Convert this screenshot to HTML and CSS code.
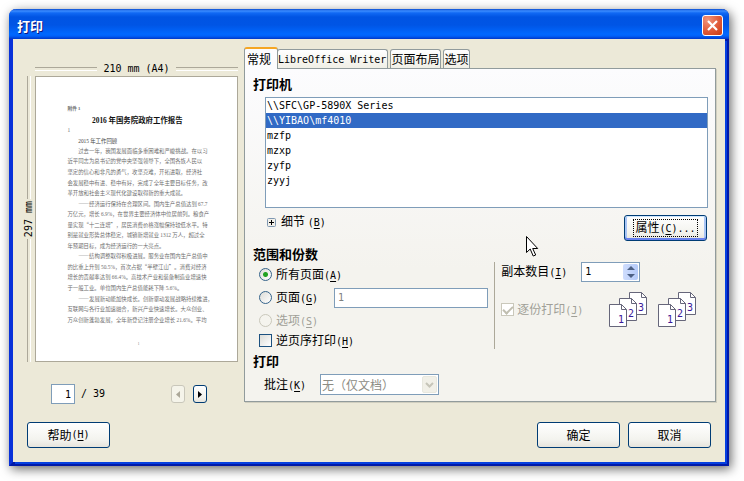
FILE: index.html
```html
<!DOCTYPE html>
<html lang="zh-CN">
<head>
<meta charset="utf-8">
<title>打印</title>
<link rel="stylesheet" href="styles.css">
</head>
<body>
<form class="window">
  <header class="titlebar">
    <h1>打印</h1>
    <button type="button" class="close" aria-label="关闭">
      <svg width="11" height="11" viewBox="0 0 11 11"><path d="M1 1L10 10M10 1L1 10" stroke="#fff" stroke-width="2.2"/></svg>
    </button>
  </header>

  <main class="client">
    <div class="columns">
      <section class="preview">
        <div class="ruler ruler-x"><span class="lat">210 mm (A4)</span></div>
        <div class="ruler ruler-y"><span class="lat">297 mm</span></div>
        <svg class="paper" viewBox="0 0 595 842">
          <g class="bold"><text x="93" y="99" font-size="14">附件 <tspan class="n">1</tspan></text></g>
          <text class="title" x="300" y="135" text-anchor="middle"><tspan class="n">2016</tspan> 年国务院政府工作报告</text>
          <text class="n" x="93" y="162">1</text>
          <text class="sub" x="125" y="194"><tspan class="n">2015</tspan> 年工作回顾</text>
          <text x="125" y="225">过去一年，我国发展面临多重困难和严峻挑战。在以习</text>
          <text x="93" y="256">近平同志为总书记的党中央坚强领导下，全国各族人民以</text>
          <text x="93" y="287">坚定的信心和非凡的勇气，攻坚克难，开拓进取，经济社</text>
          <text x="93" y="319">会发展稳中有进、稳中有好，完成了全年主要目标任务，改</text>
          <text x="93" y="350">革开放和社会主义现代化建设取得新的重大成就。</text>
          <text x="125" y="381">——经济运行保持在合理区间。国内生产总值达到 <tspan class="n">67.7</tspan></text>
          <text x="93" y="412">万亿元，增长 <tspan class="n">6.9%</tspan>，在世界主要经济体中位居前列。粮食产</text>
          <text x="93" y="443">量实现“十二连增”，居民消费价格涨幅保持较低水平。特</text>
          <text x="93" y="475">别是就业形势总体稳定，城镇新增就业 <tspan class="n">1312</tspan> 万人，超过全</text>
          <text x="93" y="506">年预期目标，成为经济运行的一大亮点。</text>
          <text x="125" y="537">——结构调整取得积极进展。服务业在国内生产总值中</text>
          <text x="93" y="568">的比重上升到 <tspan class="n">50.5%</tspan>，首次占据“半壁江山”。消费对经济</text>
          <text x="93" y="599">增长的贡献率达到 <tspan class="n">66.4%</tspan>。高技术产业和装备制造业增速快</text>
          <text x="93" y="631">于一般工业。单位国内生产总值能耗下降 <tspan class="n">5.6%</tspan>。</text>
          <text x="125" y="662">——发展新动能加快成长。创新驱动发展战略持续推进，</text>
          <text x="93" y="693">互联网与各行业加速融合，新兴产业快速增长。大众创业、</text>
          <text x="93" y="724">万众创新蓬勃发展，全年新登记注册企业增长 <tspan class="n">21.6%</tspan>。平均</text>
          <text class="n" x="301" y="794" font-size="10">1</text>
        </svg>
        <div class="pager">
          <input class="field lat page" type="text" value="1" aria-label="页码">
          <span class="lat">/ 39</span>
          <div class="steps">
            <button type="button" class="btn step" disabled aria-label="上一页"><svg width="4" height="7" viewBox="0 0 4 7"><path d="M4 0v7L0 3.5z" fill="currentColor"/></svg></button>
            <button type="button" class="btn step" aria-label="下一页"><svg width="4" height="7" viewBox="0 0 4 7"><path d="M0 0v7L4 3.5z" fill="currentColor"/></svg></button>
          </div>
        </div>
      </section>

      <section class="options">
        <div class="tabs" role="tablist">
          <button type="button" class="tab active" role="tab" aria-selected="true">常规</button>
          <button type="button" class="tab" role="tab"><span class="lat">LibreOffice Writer</span></button>
          <button type="button" class="tab" role="tab">页面布局</button>
          <button type="button" class="tab" role="tab">选项</button>
        </div>
        <div class="panel" role="tabpanel">
          <h2 id="printers">打印机</h2>
          <select class="printers lat" size="7" aria-labelledby="printers">
            <option>\\SFC\GP-5890X Series</option>
            <option selected>\\YIBAO\mf4010</option>
            <option>mzfp</option>
            <option>mzxp</option>
            <option>zyfp</option>
            <option>zyyj</option>
          </select>
          <div class="details-row">
            <button type="button" class="expander">
              <svg width="9" height="9" viewBox="0 0 9 9"><rect x=".5" y=".5" width="8" height="8" rx="1" fill="#f1efe8" stroke="#7f98b2"/><path d="M2 4.5h5M4.5 2v5" stroke="#000"/></svg>
              <span>细节 <span class="lat">(<u>B</u>)</span></span>
            </button>
            <button type="button" class="btn focus"><span class="dots">属性<span class="lat">(<u>C</u>)...</span></span></button>
          </div>

          <h2 class="range-title">范围和份数</h2>
          <div class="range">
            <div class="scope">
              <div class="line"><input type="radio" name="scope" id="all" checked><label for="all">所有页面<span class="lat">(<u>A</u>)</span></label></div>
              <div class="line"><input type="radio" name="scope" id="pages"><label for="pages">页面<span class="lat">(<u>G</u>)</span></label><input class="field lat pages" type="text" value="1" aria-label="页面范围"></div>
              <div class="line off"><input type="radio" name="scope" id="sel" disabled><label for="sel">选项<span class="lat">(<u>S</u>)</span></label></div>
              <div class="line last"><input type="checkbox" id="reverse"><label for="reverse">逆页序打印<span class="lat">(<u>H</u>)</span></label></div>
            </div>
            <div class="copies">
              <div class="copy-line">
                <label for="count">副本数目<span class="lat">(<u>I</u>)</span></label>
                <div class="field spin">
                  <input type="text" class="lat" id="count" value="1">
                  <div class="spin-buttons">
                    <button type="button" aria-label="增加"><svg width="8" height="4" viewBox="0 0 8 4"><path d="M0 4L4 0l4 4z" fill="#4d6185"/></svg></button>
                    <button type="button" aria-label="减少"><svg width="8" height="4" viewBox="0 0 8 4"><path d="M0 0l4 4 4-4z" fill="#4d6185"/></svg></button>
                  </div>
                </div>
              </div>
              <div class="collate-line off">
                <input type="checkbox" id="collate" checked disabled><label for="collate">逐份打印<span class="lat">(<u>J</u>)</span></label>
                <svg class="stack" width="38" height="35" viewBox="0 0 38 35">
                  <defs>
                    <g id="sheet"><path d="M.5 .5h12l5 5v17H.5z" fill="#fff" stroke="#66667a"/><path d="M12.500 .5v5h5" fill="none" stroke="#66667a"/></g>
                    <g id="stack">
                      <use href="#sheet" x="20" y="0"/><text x="29" y="19">3</text>
                      <use href="#sheet" x="10" y="6"/><text x="19" y="25">2</text>
                      <use href="#sheet" x="0" y="12"/><text x="9" y="31">1</text>
                    </g>
                  </defs>
                  <use href="#stack"/>
                </svg>
                <svg class="stack" width="38" height="35" viewBox="0 0 38 35"><use href="#stack"/></svg>
              </div>
            </div>
          </div>

          <h2 class="print-title">打印</h2>
          <div class="comment-line">
            <label for="comment">批注<span class="lat">(<u>K</u>)</span></label>
            <div class="combo">
              <select id="comment" class="field" disabled><option>无（仅文档）</option></select>
              <span class="arrow"><svg width="9" height="6" viewBox="0 0 9 6"><path d="M1 1l3.5 3.5L8 1" fill="none" stroke="#c6c5b9" stroke-width="2"/></svg></span>
            </div>
          </div>
        </div>
      </section>
    </div>

    <footer class="actions">
      <button type="button" class="btn help">帮助<span class="lat">(<u>H</u>)</span></button>
      <button type="submit" class="btn">确定</button>
      <button type="button" class="btn">取消</button>
    </footer>
  </main>
</form>
<svg class="pointer" width="13" height="21" viewBox="0 0 13 21"><path d="M.5 .5v16l3.700-3.500 3 7 2.500-1-3-6.500h5z" fill="#fff" stroke="#000"/></svg>
</body>
</html>
```
FILE: styles.css
```css
* { box-sizing: border-box; }

body {
  margin: 0;
  padding: 9px 15px 15px 9px;
  background: #fff;
  color: #000;
  font: 12px/16px "Noto Sans CJK SC", sans-serif;
}

button, input, select {
  margin: 0;
  padding: 0;
  border: 0;
  background: none;
  color: inherit;
  font: inherit;
}

.lat {
  font-family: "DejaVu Sans Mono", "Noto Sans CJK SC", monospace;
  font-size: 10px;
}

u { text-underline-offset: 2px; }

/* Window frame */
.window {
  border: 4px solid #0540e0;
  border-top: 0;
  border-color: #0540e0 #0019a8 #0019a8 #0831d9;
  border-radius: 7px 7px 0 0;
  background: #ece9d8;
  box-shadow: 2px 3px 11px rgba(0, 0, 0, 0.6);
}

.titlebar {
  display: flex;
  align-items: center;
  justify-content: space-between;
  height: 30px;
  margin: 0 -4px;
  padding: 3px 6px 0 8px;
  border-radius: 7px 7px 0 0;
  background: linear-gradient(#0a4cd0 0, #3a8cff 2px, #1069f4 4px, #0054e3 8px, #0055e5 16px, #0068ff 25px, #0061fa 27px, #0038c8 30px);
}

h1 {
  margin: 0;
  color: #fff;
  font-size: 13px;
  line-height: 18px;
  text-shadow: 1px 1px 0 #0a1883;
}

.close {
  display: flex;
  align-items: center;
  justify-content: center;
  width: 21px;
  height: 21px;
  border: 1px solid #fff;
  border-radius: 3px;
  background: radial-gradient(circle at 25% 20%, #f0957c, #e05a38 55%, #c93a10);
}

.client {
  padding: 8px 9px 14px 14px;
  box-shadow: 2px 2px 0 #0540e0;
}

.columns {
  display: grid;
  grid-template-columns: 210px 1fr;
  align-items: start;
  gap: 6px;
  padding-left: 1px;
}

/* Page preview */
.preview {
  display: grid;
  grid-template-columns: 7px 1fr;
  grid-template-rows: 14px auto auto;
  align-content: start;
  padding-top: 15px;
}

.ruler {
  display: flex;
  align-items: center;
  gap: 6px;
  line-height: 14px;
  white-space: nowrap;
}

.ruler::before, .ruler::after {
  content: "";
  flex: 1;
}

.ruler-x { grid-column: 2; }

.ruler-x::before, .ruler-x::after {
  height: 2px;
  border-top: 1px solid #aca899;
  border-bottom: 1px solid #fff;
}

.ruler-y {
  writing-mode: vertical-rl;
  justify-self: center;
  width: 2px;
  margin-right: 5px;
  gap: 2px;
}

.ruler-y .lat {
  flex: none;
  transform: rotate(180deg);
}

.ruler-y::before, .ruler-y::after {
  width: 2px;
  border-left: 1px solid #aca899;
  border-right: 1px solid #fff;
}

.paper {
  display: block;
  width: 100%;
  border: 1px solid #aca899;
  background: #fff;
  fill: #6e6e6e;
  font-size: 16px;
}

.paper .n { font-family: "Liberation Serif", serif; }
.paper .bold { font-weight: 700; }
.paper .title { fill: #111; font-size: 22px; font-weight: 700; }
.paper .sub { fill: #444; }

.pager {
  grid-column: 1 / -1;
  display: flex;
  align-items: center;
  gap: 6px;
  padding: 22px 31px 0 23px;
}

.field {
  border: 1px solid #7f9db9;
  background: #fff;
}

.page {
  width: 24px;
  height: 20px;
  padding-right: 3px;
  text-align: right;
}

.steps {
  display: flex;
  gap: 8px;
  margin-left: auto;
}

/* Buttons */
.btn {
  display: flex;
  align-items: center;
  justify-content: center;
  width: 83px;
  height: 26px;
  border: 1px solid #003c74;
  border-radius: 3px;
  background: linear-gradient(#fff, #f3f3ee 70%, #e6e4dc);
}

.btn .lat { line-height: 14px; }

.btn.step {
  width: 14px;
  height: 18px;
}

.btn:disabled {
  border-color: #c9c7ba;
  background: #f5f4ea;
  color: #aca899;
}

.btn.focus {
  margin-top: 2px;
  box-shadow: inset 0 1px 0 #cee7ff, inset 0 -2px 0 #6982ee, inset 2px 0 0 #a9c5f5, inset -2px 0 0 #a9c5f5;
}

.dots {
  padding: 0 1px;
  border: 1px dotted #000;
  line-height: 14px;
}

/* Tabs */
.tabs {
  display: flex;
  align-items: flex-end;
  gap: 2px;
  height: 21px;
}

.tab {
  height: 19px;
  padding: 0 1px 0 0;
  border: 1px solid #919b9c;
  border-bottom: 0;
  border-radius: 3px 3px 0 0;
  background: linear-gradient(#fff, #f0efe6);
}

.tab.active {
  position: relative;
  height: 22px;
  margin: 0 -3px -1px 0;
  padding: 0 6px 0 2px;
  border-top: 2px solid #f5a623;
  background: #fcfcfe;
}

.panel {
  padding: 7px 7px 6px 8px;
  border: 1px solid #919b9c;
  background: linear-gradient(#fcfcfe, #f4f3ee 60%);
  box-shadow: 1px 1px 0 #d0cebf;
}

h2 {
  margin: 0;
  font-size: 13px;
  line-height: 16px;
}

.printers {
  display: block;
  width: calc(100% - 12px);
  height: 111px;
  margin: 5px 0 0 12px;
  border: 1px solid #7f9db9;
  border-radius: 0;
  background: #fff;
  outline: 0;
  overflow: hidden;
}

.printers option {
  height: 15px;
  min-height: 15px;
  padding: 2px 1px 0;
  color: #000;
  line-height: 13px;
}

.printers option:checked {
  background: linear-gradient(#316ac5, #316ac5);
  color: #fff !important;
}

.details-row {
  display: flex;
  align-items: flex-start;
  justify-content: space-between;
  padding: 5px 1px 0 14px;
}

.expander {
  display: flex;
  align-items: center;
  gap: 5px;
}

.range-title { margin-top: 5px; }
.print-title { margin-top: 4px; }

.range {
  display: grid;
  grid-template-columns: 53fr 47fr;
}

.scope { padding: 1px 6px 0; }

.line {
  display: flex;
  align-items: center;
  gap: 4px;
  height: 23px;
}

.line.last { height: 17px; }

.off { color: #a09f97; }

.pages {
  flex: 1;
  height: 20px;
  margin-left: 12px;
  padding: 0 3px;
  color: #808080;
}

input[type="radio"], input[type="checkbox"] {
  appearance: none;
  flex: none;
  width: 13px;
  height: 13px;
  border: 1px solid #1c5180;
  background: linear-gradient(135deg, #dcdcd7, #fff);
}

input[type="radio"] {
  border-color: #36648b;
  border-radius: 50%;
}

input[type="radio"]:checked {
  background: radial-gradient(circle, #21a121 0, #21a121 2px, transparent 3px), linear-gradient(135deg, #dcdcd7, #fff);
}

input[type="radio"]:disabled, input[type="checkbox"]:disabled {
  border-color: #cac8bb;
  background: #fff;
}

input[type="radio"]:disabled { background: #f5f4ee; }

input[type="checkbox"]:checked {
  display: grid;
  place-items: center;
}

input[type="checkbox"]:checked::before {
  content: "";
  width: 8px;
  height: 4px;
  margin-bottom: 2px;
  border: solid #c0beb0;
  border-width: 0 0 2px 2px;
  transform: rotate(-45deg);
}

.copies {
  padding-left: 6px;
  border-left: 1px solid #aca899;
}

.copy-line {
  display: flex;
  align-items: center;
  gap: 14px;
}

.spin {
  display: flex;
  width: 59px;
  height: 20px;
  padding: 1px;
}

.spin input {
  flex: 1;
  min-width: 0;
  padding-left: 2px;
}

.spin-buttons {
  display: flex;
  flex-direction: column;
  width: 15px;
  border-radius: 2px;
  background: linear-gradient(90deg, #cfddfd, #b5cbf9);
}

.spin-buttons button {
  display: flex;
  flex: 1;
  align-items: center;
  justify-content: center;
}

.collate-line {
  display: flex;
  align-items: center;
  gap: 3px;
  padding-top: 10px;
}

.stack {
  margin-left: 8px;
  font: 10px "DejaVu Sans Mono", monospace;
  fill: #3a1a9a;
}

.collate-line label { margin-right: 15px; }

.comment-line {
  display: flex;
  align-items: center;
  gap: 14px;
  padding: 5px 0 0 11px;
}

.combo { position: relative; }

.combo select {
  appearance: none;
  display: block;
  width: 119px;
  height: 21px;
  padding: 0 18px 0 1px;
  border-radius: 0;
  color: #8d8c84;
  opacity: 1;
}

.arrow {
  position: absolute;
  top: 2px;
  right: 2px;
  display: flex;
  align-items: center;
  justify-content: center;
  width: 15px;
  height: 17px;
  border: 1px solid #e8e8df;
  border-radius: 2px;
  background: #f1f0e8;
  pointer-events: none;
}

.actions {
  display: flex;
  gap: 8px;
  margin-top: 18px;
  padding-right: 5px;
}

.actions .help { margin-right: auto; }

.pointer {
  position: absolute;
  top: 236px;
  left: 526px;
}
```
